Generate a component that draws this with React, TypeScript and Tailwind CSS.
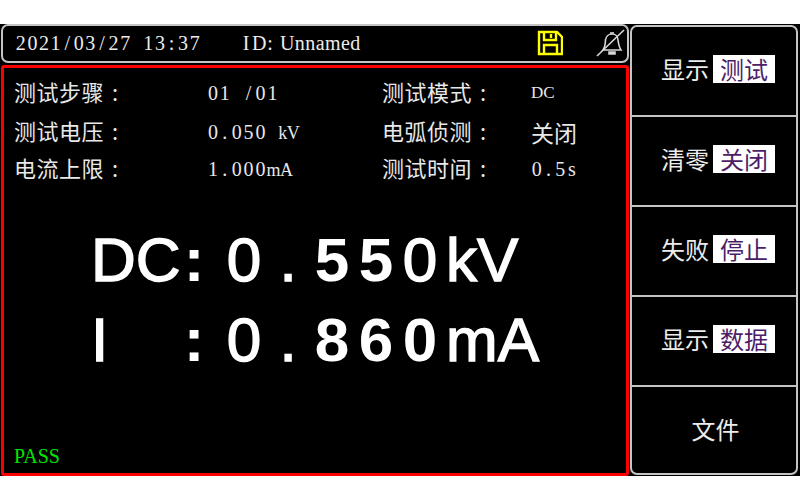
const serif = "font-['Liberation_Serif','Noto_Sans_CJK_SC',serif]";
const cjk = "font-['Noto_Sans_CJK_SC','Liberation_Sans',sans-serif]";

const rows = [
  ["测试步骤", "01 /01", "", "测试模式", "h-[41px]"],
  ["测试电压", "0.050 ", "kV", "电弧侦测", "h-[37px]"],
  ["电流上限", "1.000", "mA", "测试时间", "h-[36px]"],
];

const menu = [
  ["显示", "测试"],
  ["清零", "关闭"],
  ["失败", "停止"],
  ["显示", "数据"],
];

// the instrument font is fixed pitch, so each glyph gets its own cell
function Cells({ text, className }: { text: string; className: string }) {
  return (
    <span className={`inline-flex whitespace-pre ${serif}`}>
      {text.split("").map((c, i) => (
        <span key={i} className={`${className} shrink-0 text-center`}>
          {c}
        </span>
      ))}
    </span>
  );
}

function Label({ text, className }: { text: string; className: string }) {
  return (
    <span className={`${className} flex items-center pb-[6px] text-[22px] tracking-[0.5px] ${cjk}`}>
      {text}
      <span className="ml-[8px]">:</span>
    </span>
  );
}

function BigLine({ head, num, unit }: { head: string; num: { c: string; bold: boolean }[]; unit: string }) {
  const thick = "[-webkit-text-stroke:1.4px_white]";
  return (
    <div className="flex items-center h-[80px] font-['Liberation_Sans',sans-serif] text-[62px] leading-none text-white">
      <div className={`w-[88px] ${thick}`}>{head}</div>
      <div className="w-[30px] mr-[13px] text-center font-bold">:</div>
      {num.map((n, i) => (
        <div key={i} className={`w-[44px] text-center ${n.bold ? "font-bold" : thick}`}>
          {n.c}
        </div>
      ))}
      <div className={`pl-[4px] ${thick}`}>{unit}</div>
    </div>
  );
}

function digits(s: string, bold: boolean[]) {
  return s.split("").map((c, i) => ({ c, bold: bold[i] }));
}

export default function App() {
  return (
    <div className="w-[800px] h-[500px] bg-white pt-[24px]">
      <div className="h-[452px] bg-black flex">
        {/* Left: status + readings */}
        <div className="w-[630px] flex flex-col pl-px pr-[1px]">
          <div className="h-[39px] border-2 border-[#c4c4c4] rounded-[7px] flex items-center pl-[12px] pb-[1px] text-[20px] text-[#ececec]">
            <span className="w-[225px]">
              <Cells text="2021/03/27 13:37" className="w-[11.6px]" />
            </span>
            <span className={`w-[297px] flex ${serif}`}>
              <Cells text="ID:" className="w-[12px]" />
              <span className="ml-[4px] tracking-[0.4px]">Unnamed</span>
            </span>
            <svg width="26" height="26" viewBox="0 0 26 26" fill="none" stroke="#ffff00" strokeWidth="2.4">
              <path d="M2 2H20L25 7V24H2Z" />
              <path d="M7 2V10H19V2" />
              <path d="M14 4V8" />
              <path d="M7 24V15H20V24" />
            </svg>
            <svg className="ml-[33px]" width="30" height="28" viewBox="0 0 30 28" fill="none" stroke="#d8d8d8" strokeWidth="1.6">
              <path d="M7 21C10 17 9 14 9.500 11C10 7 13 5 16 5C19 5 22 7 22 11C22.500 15 23 18 25 21Z" />
              <path d="M14 4H18" />
              <path d="M13 23H19V25H13Z" fill="#d8d8d8" />
              <path d="M1 27L28 1" />
            </svg>
          </div>

          <div className="flex-1 mt-[2px] border-[3px] border-[#ff0000] rounded-[3px] flex flex-col pl-[10px] pt-[6px] text-[#e8e8e8]">
            {rows.map((r, i) => (
              <div key={r[0]} className={`flex items-center ${r[4]}`}>
                <Label text={r[0]} className="w-[193px]" />
                <span className={`w-[175px] flex items-baseline pb-[3px] text-[20px] ${serif}`}>
                  <Cells text={r[1]} className="w-[11.9px]" />
                  {r[2] && <span className="text-[18px] tracking-[-0.5px]">{r[2]}</span>}
                </span>
                <Label text={r[3]} className="w-[149px]" />
                {i === 0 && <span className={`pb-[3px] text-[17px] ${serif}`}>DC</span>}
                {i === 1 && <span className={`text-[23px] pb-[2px] ${cjk}`}>关闭</span>}
                {i === 2 && (
                  <span className="pb-[3px] text-[20px]">
                    <Cells text="0.5s" className="w-[11.7px]" />
                  </span>
                )}
              </div>
            ))}

            <div className="flex flex-col pl-[77px] mt-[32px]">
              <BigLine head="DC" num={digits("0.550", [false, false, true, true, false])} unit="kV" />
              <BigLine head="I" num={digits("0.860", [false, false, true, true, true])} unit="mA" />
            </div>

            <div className={`mt-auto mb-[2px] text-[20px] text-[#00e600] ${serif}`}>PASS</div>
          </div>
        </div>

        {/* Right: soft keys */}
        <div className="w-[168px] mt-[1px] mb-[1px] border-2 border-[#c4c4c4] rounded-[7px] flex flex-col">
          {menu.map(([label, value], i) => (
            <div key={i} className="h-[90px] shrink-0 border-b-2 border-[#c4c4c4] flex items-center pl-[29px] pb-[4px]">
              <span className={`w-[52px] text-[24px] leading-none text-[#ececec] ${cjk}`}>{label}</span>
              <span className={`w-[62px] h-[28px] bg-white text-[24px] leading-[28px] text-center text-[#4d1d66] ${cjk}`}>{value}</span>
            </div>
          ))}
          <div className={`flex-1 flex items-center justify-center pl-[3px] pb-[3px] text-[24px] text-[#ececec] ${cjk}`}>文件</div>
        </div>
      </div>
    </div>
  );
}
